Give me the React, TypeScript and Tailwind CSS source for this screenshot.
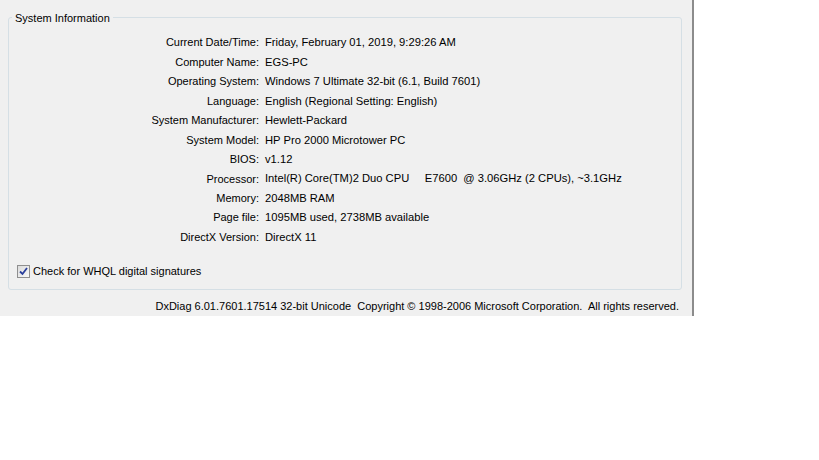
const rows: [string, string][] = [
  ["Current Date/Time:", "Friday, February 01, 2019, 9:29:26 AM"],
  ["Computer Name:", "EGS-PC"],
  ["Operating System:", "Windows 7 Ultimate 32-bit (6.1, Build 7601)"],
  ["Language:", "English (Regional Setting: English)"],
  ["System Manufacturer:", "Hewlett-Packard"],
  ["System Model:", "HP Pro 2000 Microtower PC"],
  ["BIOS:", "v1.12"],
  ["Processor:", "Intel(R) Core(TM)2 Duo CPU     E7600  @ 3.06GHz (2 CPUs), ~3.1GHz"],
  ["Memory:", "2048MB RAM"],
  ["Page file:", "1095MB used, 2738MB available"],
  ["DirectX Version:", "DirectX 11"],
];

export default function App() {
  return (
    <div className="w-[819px] h-[460px] bg-white font-['Liberation_Sans',Arial,sans-serif] text-[11px] text-black">
      <div className="w-[694px] h-[316px] bg-[#f0f0f0] border-r-2 border-[#8c8c8c] pt-[17px] px-[8px]">
        <div className="relative w-[674px] h-[273px] border border-[#d5dfe5] rounded-[3px] pt-[15px]">
          <span className="absolute left-[3px] top-[-8px] px-[3px] bg-[#f0f0f0] leading-[16px]">
            System Information
          </span>
          <div className="flex flex-col">
            {rows.map(([label, value]) => (
              <div key={label} className="flex h-[19.45px] items-center">
                <div className="w-[250px] text-right">{label}</div>
                <div className="pl-[6px] whitespace-pre text-[11.2px]">{value}</div>
              </div>
            ))}
          </div>
          <div className="flex items-center mt-[16px] ml-[8px] gap-[3px]">
            <div className="w-[13px] h-[13px] border border-[#8f8f8f] bg-gradient-to-br from-[#dcdcdc] to-[#f8f8f8] flex items-center justify-center">
              <svg width="9" height="9" viewBox="0 0 9 9">
                <path d="M1 4.5 L3.5 7 L8 1" fill="none" stroke="#2a3f9c" strokeWidth="1.8" />
              </svg>
            </div>
            <span>Check for WHQL digital signatures</span>
          </div>
        </div>
        <div className="flex justify-end pr-[5px] mt-[8px] whitespace-pre">
          DxDiag 6.01.7601.17514 32-bit Unicode  Copyright © 1998-2006 Microsoft Corporation.  All rights reserved.
        </div>
      </div>
    </div>
  );
}
